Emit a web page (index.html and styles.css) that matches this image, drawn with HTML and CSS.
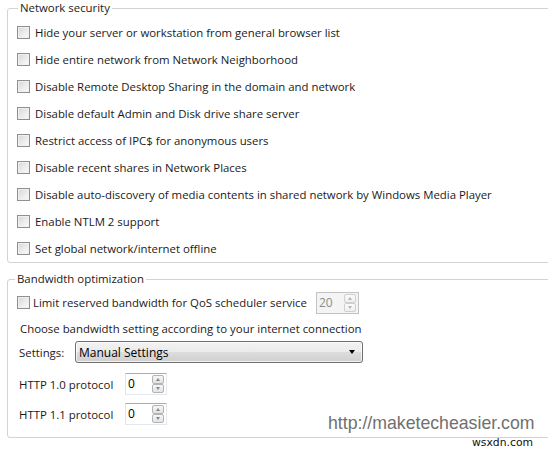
FILE: index.html
```html
<!DOCTYPE html>
<html>
<head>
<meta charset="utf-8">
<link rel="stylesheet" href="styles.css">
</head>
<body>
<div class="page">
  <fieldset class="group group-security">
    <legend class="legend legend-security">Network security</legend>
    <div class="row"><span class="cb"></span><span class="label">Hide your server or workstation from general browser list</span></div>
    <div class="row"><span class="cb"></span><span class="label">Hide entire network from Network Neighborhood</span></div>
    <div class="row"><span class="cb"></span><span class="label">Disable Remote Desktop Sharing in the domain and network</span></div>
    <div class="row"><span class="cb"></span><span class="label">Disable default Admin and Disk drive share server</span></div>
    <div class="row"><span class="cb"></span><span class="label">Restrict access of IPC$ for anonymous users</span></div>
    <div class="row"><span class="cb"></span><span class="label">Disable recent shares in Network Places</span></div>
    <div class="row"><span class="cb"></span><span class="label">Disable auto-discovery of media contents in shared network by Windows Media Player</span></div>
    <div class="row"><span class="cb"></span><span class="label">Enable NTLM 2 support</span></div>
    <div class="row"><span class="cb"></span><span class="label">Set global network/internet offline</span></div>
  </fieldset>

  <fieldset class="group group-bw">
    <legend class="legend legend-bw">Bandwidth optimization</legend>
    <div class="row row-qos">
      <span class="cb"></span><span class="label label-qos">Limit reserved bandwidth for QoS scheduler service</span>
      <span class="spin spin-qos disabled">
        <span class="spin-value">20</span>
        <span class="spin-btns"><span class="spin-btn"><span class="arr up"></span></span><span class="spin-btn"><span class="arr down"></span></span></span>
      </span>
    </div>
    <div class="line line-choose">Choose bandwidth setting according to your internet connection</div>
    <div class="line line-settings">
      <span class="settings-label">Settings:</span>
      <div class="select"><span class="select-text">Manual Settings</span><span class="caret"></span></div>
    </div>
    <div class="line line-proto">
      <span class="proto-label">HTTP 1.0 protocol</span>
      <span class="spin">
        <span class="spin-value">0</span>
        <span class="spin-btns"><span class="spin-btn"><span class="arr up"></span></span><span class="spin-btn"><span class="arr down"></span></span></span>
      </span>
    </div>
    <div class="line line-proto line-proto2">
      <span class="proto-label">HTTP 1.1 protocol</span>
      <span class="spin">
        <span class="spin-value">0</span>
        <span class="spin-btns"><span class="spin-btn"><span class="arr up"></span></span><span class="spin-btn"><span class="arr down"></span></span></span>
      </span>
    </div>
  </fieldset>

  <div class="watermark">http://maketecheasier.com</div>
  <div class="credit">wsxdn.com</div>
</div>
</body>
</html>
```

FILE: styles.css
```css
html, body {
  margin: 0;
  padding: 0;
  background: #ffffff;
}
body {
  width: 548px;
  height: 453px;
  overflow: hidden;
  font-family: "Open Sans", "Noto Sans", sans-serif;
  font-size: 11.4px;
  color: #1a1a1a;
}
.page {
  position: relative;
  width: 548px;
  height: 453px;
  overflow: hidden;
}
.group {
  margin: 0 0 0 7px;
  width: 570px;
  box-sizing: border-box;
  border: 1px solid #d3d3d3;
  border-radius: 3px;
  padding: 0 0 0 9px;
  min-width: 0;
}
.legend {
  padding: 0 2px;
  line-height: 16px;
  font-size: 11.4px;
}
.legend-security { margin-left: 1px; }
.legend-bw { margin-left: -2px; }
.group-security {
  padding-top: 3px;
  padding-bottom: 0;
}
.row {
  display: flex;
  align-items: center;
  height: 27px;
}
.cb {
  flex: none;
  width: 11px;
  height: 11px;
  border: 1px solid #8e8f8f;
  background: linear-gradient(135deg, #d6d6d6 0%, #ececec 55%, #fbfbfb 100%);
  box-shadow: inset 0 0 0 1px #f0f0f0;
  margin-right: 5px;
}
.label { white-space: nowrap; }

.group-bw {
  margin-top: 8px;
  height: 167px;
  padding-top: 4px;
}
.row-qos {
  height: 23px;
}
.group-bw .cb { margin-right: 3px; }
.label-qos { margin-right: 9px; }

.spin {
  flex: none;
  display: flex;
  box-sizing: border-box;
  width: 42px;
  height: 22px;
  border: 1px solid #abadb3;
  border-color: #abadb3 #e3e9ef #e3e9ef #e2e3ea;
  background: #fff;
  padding: 1px 2px 1px 2px;
  align-items: stretch;
}
.spin-qos { width: 43px; }
.spin-value {
  flex: 1;
  line-height: 18px;
  font-size: 12px;
  color: #000;
}
.spin-btns {
  display: flex;
  flex-direction: column;
  width: 12px;
}
.spin-btn {
  flex: 1;
  display: flex;
  align-items: center;
  justify-content: center;
  border: 1px solid #b4b4b4;
  border-radius: 2px;
  background: linear-gradient(#f7f7f7, #e2e2e2);
}
.arr {
  width: 0;
  height: 0;
  border-left: 2.5px solid transparent;
  border-right: 2.5px solid transparent;
}
.arr.up { border-bottom: 3px solid #7a8a9c; }
.arr.down { border-top: 3px solid #7a8a9c; }
.spin.disabled {
  background: #f4f4f4;
  border: 1px solid #c2c2c2;
}
.spin.disabled .spin-value { color: #8d8d8d; }
.spin.disabled .spin-btn {
  border-color: #cfcfcf;
  background: linear-gradient(#fafafa, #efefef);
}
.spin.disabled .arr.up { border-bottom-color: #b5b5b5; }
.spin.disabled .arr.down { border-top-color: #b5b5b5; }

.line {
  display: flex;
  align-items: center;
  white-space: nowrap;
}
.line-choose {
  height: 24px;
  padding-left: 3px;
  margin-top: 2px;
}
.line-settings {
  height: 24px;
  padding-left: 2px;
}
.settings-label { width: 56px; }
.select {
  box-sizing: border-box;
  width: 288px;
  height: 22px;
  border: 1px solid #707070;
  border-radius: 3px;
  background: linear-gradient(#f2f2f2 0%, #ebebeb 50%, #dddddd 51%, #cfcfcf 100%);
  box-shadow: inset 0 0 0 1px rgba(255,255,255,0.7);
  display: flex;
  align-items: center;
  padding: 0 7px 0 3px;
}
.select-text { flex: 1; color: #000; font-size: 12px; }
.caret {
  width: 0;
  height: 0;
  border-left: 3.5px solid transparent;
  border-right: 3.5px solid transparent;
  border-top: 4px solid #000;
}
.line-proto {
  height: 30px;
  padding-left: 2px;
  margin-top: 5px;
}
.line-proto2 { margin-top: 0; }
.proto-label { width: 106px; }

.watermark {
  position: absolute;
  left: 328px;
  top: 413px;
  font-family: "Liberation Sans", Arial, sans-serif;
  font-size: 17.7px;
  color: #707070;
  white-space: nowrap;
}
.credit {
  position: absolute;
  left: 472px;
  top: 436px;
  font-family: "DejaVu Sans", Verdana, sans-serif;
  font-size: 10.8px;
  color: #111;
  white-space: nowrap;
}
```
